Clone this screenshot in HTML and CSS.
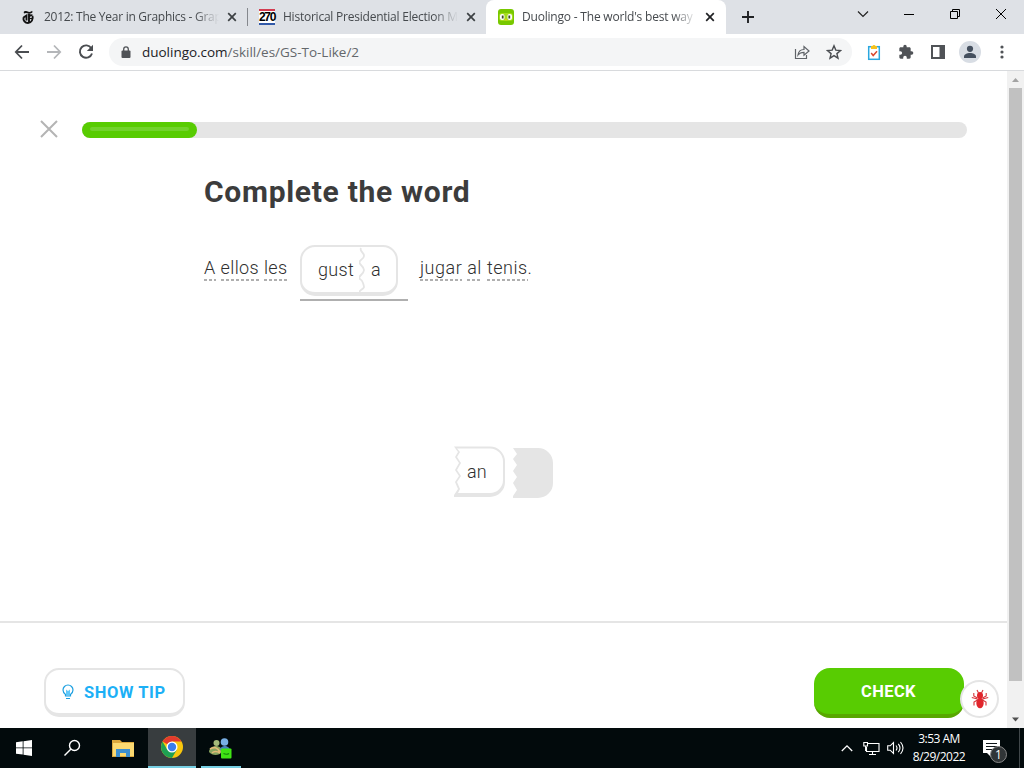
FILE: index.html
```html
<!DOCTYPE html>
<html lang="en">
<head>
    <meta charset="UTF-8">
    <meta name="viewport" content="width=device-width, initial-scale=1.0">
    <title>Duolingo - The world's best way</title>
    <link rel="stylesheet" href="styles.css">
</head>
<body>
    <div class="tabs">
        <div class="tab">
            <svg class="favicon" width="16" height="16" viewBox="0 0 16 16"><path d="M4 4.500C3 2 5 1.500 7 2.300s4 1 5-.5c1.500 2-1 3.200-3 2.700S5.500 3.500 4 4.500z" fill="#111"/><path d="M12.500 6.500c-2-1-3 0-3 1.500M12.500 7c1 3-1 7-4.500 7-3 0-5-2.500-4.500-5.500M3.500 8.500l3-2v5M9 4.500v9" fill="none" stroke="#111" stroke-width="1.900"/><path d="M9 9.500h4" stroke="#111" stroke-width="1.200"/></svg>
            <span class="tab-title title-nyt">2012: The Year in Graphics - Grap</span>
            <svg class="tab-close" width="10" height="10" viewBox="0 0 10 10"><path d="M1.200 1.200l7.600 7.600M8.800 1.200L1.200 8.800" stroke="#3c4043" stroke-width="1.700"/></svg>
        </div>
        <div class="tab tab-second">
            <span class="favicon icon-270">270</span>
            <span class="tab-title title-270">Historical Presidential Election M</span>
            <svg class="tab-close" width="10" height="10" viewBox="0 0 10 10"><path d="M1.200 1.200l7.600 7.600M8.800 1.200L1.200 8.800" stroke="#3c4043" stroke-width="1.700"/></svg>
        </div>
        <div class="tab tab-active">
            <svg class="favicon" width="16" height="16" viewBox="0 0 16 16"><rect width="16" height="16" rx="3" fill="#78c800"/><rect x="1" y="4" width="14" height="8" rx="3" fill="#a5dc1d"/><rect x="2" y="5" width="4.500" height="6" rx="2" fill="#fff"/><rect x="9.500" y="5" width="4.500" height="6" rx="2" fill="#fff"/><path d="M4.700 6.500v3M11.300 6.500v3" stroke="#3c4a20" stroke-width="1.800"/><path d="M7 10h2l-1 2z" fill="#ffc800"/></svg>
            <span class="tab-title title-duo">Duolingo - The world's best way</span>
            <svg class="tab-close" width="10" height="10" viewBox="0 0 10 10"><path d="M1.200 1.200l7.600 7.600M8.800 1.200L1.200 8.800" stroke="#202124" stroke-width="1.700"/></svg>
        </div>
        <svg class="new-tab" width="14" height="14" viewBox="0 0 14 14"><path d="M7 1v12M1 7h12" stroke="#202124" stroke-width="1.900"/></svg>
        <div class="window-buttons">
            <svg width="46" height="28" viewBox="0 0 46 28"><path d="M18 11.500l5 5 5-5" fill="none" stroke="#222" stroke-width="1.200"/></svg>
            <svg width="46" height="28" viewBox="0 0 46 28"><path d="M18 14.500h10" stroke="#000"/></svg>
            <svg width="46" height="28" viewBox="0 0 46 28"><path d="M18.500 11.500h7v7h-7zM20.500 11.500v-2h7v7h-2" fill="none" stroke="#000"/></svg>
            <svg width="46" height="28" viewBox="0 0 46 28"><path d="M18 9l10 10M28 9L18 19" stroke="#000"/></svg>
        </div>
    </div>

    <div class="toolbar">
        <svg class="nav" width="16" height="16" viewBox="0 0 16 16"><path d="M15 8H2M8 1.500L1.800 8 8 14.500" fill="none" stroke="#4a4d51" stroke-width="1.800"/></svg>
        <svg class="nav" width="16" height="16" viewBox="0 0 16 16"><path d="M1 8h13M8 1.500L14.200 8 8 14.500" fill="none" stroke="#b4b6b9" stroke-width="1.800"/></svg>
        <svg class="nav" width="16" height="16" viewBox="0 0 16 16"><path d="M13.300 4.200A6.200 6.200 0 1 0 14 9.500" fill="none" stroke="#4a4d51" stroke-width="1.900"/><path d="M15 .8V7H8.800z" fill="#4a4d51"/></svg>
        <div class="address">
            <svg width="10" height="13" viewBox="0 0 10 13"><rect x=".5" y="4.500" width="9" height="7.500" rx="1" fill="#505357"/><path d="M2.700 5V3.200a2.300 2.300 0 0 1 4.600 0V5" fill="none" stroke="#505357" stroke-width="1.300"/></svg>
            <span class="url">duolingo.com<span class="path">/skill/es/GS-To-Like/2</span></span>
            <svg class="share" width="16" height="16" viewBox="0 0 16 16"><path d="M1.500 5v9.500h11V11M4 11c.5-4 3-5.500 6-5.500V2.500L15 7l-5 4.200V8.300C7.500 8.300 5.500 9 4 11z" fill="none" stroke="#5f6368" stroke-width="1.200"/></svg>
            <svg class="star" width="16" height="16" viewBox="0 0 16 16"><path d="M8 1.800l1.800 4.300 4.700.4-3.600 3.100 1.100 4.600L8 11.700l-4 2.500 1.100-4.600-3.600-3.100 4.700-.4z" fill="none" stroke="#4a4d51" stroke-width="1.400"/></svg>
        </div>
        <svg class="ext" width="16" height="18" viewBox="0 0 16 18"><rect x="2.700" y="3.700" width="10.600" height="12.600" fill="#fff" stroke="#2aa7df" stroke-width="1.500"/><path d="M5 6V3h1.500a1.600 1.600 0 0 1 3 0H11v3z" fill="#f7c21c"/><path d="M5.200 10l2 2.500 3.800-4.200" fill="none" stroke="#d9482f" stroke-width="1.500"/></svg>
        <svg class="ext" width="16" height="16" viewBox="0 0 24 24"><path d="M20.500 11H19V7c0-1.100-.9-2-2-2h-4V3.500a2.500 2.500 0 0 0-5 0V5H4c-1.100 0-2 .9-2 2v3.800h1.500a2.700 2.700 0 0 1 0 5.400H2V20c0 1.100.9 2 2 2h3.800v-1.500a2.700 2.700 0 0 1 5.400 0V22H17c1.100 0 2-.9 2-2v-4h1.500a2.500 2.500 0 0 0 0-5z" fill="#505357"/></svg>
        <svg class="ext" width="16" height="16" viewBox="0 0 16 16"><path d="M1 1h14v14H1zM3 3v10h6.500V3z" fill="#505357" fill-rule="evenodd"/></svg>
        <svg class="avatar" width="22" height="22" viewBox="0 0 22 22"><circle cx="11" cy="11" r="11" fill="#d8dde4"/><circle cx="11" cy="7.800" r="3.100" fill="#45505f"/><path d="M5 17v-1.500c0-2 3-3.500 6-3.500s6 1.500 6 3.500V17z" fill="#45505f"/></svg>
        <svg class="dots" width="4" height="14" viewBox="0 0 4 14"><circle cx="2" cy="2" r="1.600" fill="#505357"/><circle cx="2" cy="7" r="1.600" fill="#505357"/><circle cx="2" cy="12" r="1.600" fill="#505357"/></svg>
    </div>

    <div class="viewport">
        <div class="page">
            <div class="header">
                <svg class="quit" width="18" height="18" viewBox="0 0 18 18"><path d="M1 1l16 16M17 1L1 17" stroke="#b4b4b4" stroke-width="2"/></svg>
                <div class="progress"><div class="progress-fill"><div class="shine"></div></div></div>
            </div>
            <div class="challenge">
                <h1>Complete the word</h1>
                <div class="sentence">
                    <div class="words words-left"><span class="hint">A</span> <span class="hint">ellos</span> <span class="hint">les</span></div>
                    <div class="blank">
                        <div class="token">
                            <span class="stem">gust</span>
                            <svg width="8" height="46" viewBox="0 0 8 46"><path d="M2 1q-1 2 1 4t2 4-3 4 0 5 3 5-3 5-1 4 3 4 1 4-3 3 0 4" fill="none" stroke="#e5e5e5" stroke-width="1.800"/></svg>
                            <span class="ending">a</span>
                        </div>
                    </div>
                    <div class="words words-right"><span class="hint">jugar</span> <span class="hint">al</span> <span class="hint">tenis</span>.</div>
                </div>
                <div class="choices">
                    <button class="choice" type="button">
                        <svg width="52" height="52" viewBox="0 0 52 52"><path d="M0 .5h36a15 15 0 0 1 15 15V36a15 15 0 0 1-15 15H0V49l4-6-3-7 4-6-4-6 4-7-4-6 3-5z" fill="#e5e5e5"/><path d="M3 2.500h33a13 13 0 0 1 13 13V34a13 13 0 0 1-13 13H4l2-4-3-7 4-6-4-6 4-7-4-6 3-5z" fill="#fff"/></svg>
                        <span>an</span>
                    </button>
                    <svg class="used" width="42" height="52" viewBox="0 0 42 52"><path d="M1 2h25a15 15 0 0 1 15 15v20a15 15 0 0 1-15 15H1v-2l4-6-4-7 4-6-4-6 4-6-4-6 4-5z" fill="#e5e5e5"/></svg>
                </div>
            </div>
            <div class="footer">
                <button class="tip" type="button">
                    <svg width="12" height="16" viewBox="0 0 12 16"><path d="M3.500 10.500C2 9.300 1 8 1 6a5 5 0 0 1 10 0c0 2-1 3.300-2.500 4.500v1.500h-5zM4 14.500h4" fill="none" stroke="#1c9fe0" stroke-width="1.200"/><path d="M4 5.500l2 1.500 2-1.500v6H4z" fill="#1cb0f6" opacity=".7"/></svg>
                    <span>SHOW TIP</span>
                </button>
                <button class="check" type="button"><span>CHECK</span></button>
                <div class="bug">
                    <svg width="18" height="20" viewBox="0 0 18 20"><ellipse cx="9" cy="14" rx="3.700" ry="5.200" fill="#e1252b"/><ellipse cx="9" cy="6.500" rx="3" ry="3.500" fill="#e1252b"/><path d="M6.500 9L2.800 7V4M11.500 9l3.700-2V4M6.500 10L.8 8.500M11.500 10l5.700-1.500M6.500 11L3 13v3.500M11.500 11l3.500 2v3.500M7.500 4L6 1M10.500 4L12 1" fill="none" stroke="#d8343a" stroke-width="1.100"/></svg>
                </div>
            </div>
        </div>
        <div class="scrollbar">
            <svg width="17" height="17" viewBox="0 0 17 17"><path d="M5 11l3.500-4 3.500 4z" fill="#a3a3a3"/></svg>
            <div class="thumb"></div>
            <svg class="scroll-down" width="17" height="17" viewBox="0 0 17 17"><path d="M5 6.500l3.500 4 3.500-4z" fill="#505050"/></svg>
        </div>
    </div>

    <div class="taskbar">
        <div class="task"><svg width="16" height="16" viewBox="0 0 16 16"><path d="M0 2.300L6.700 1.300v6.200H0zM7.500 1.200L16 0v7.500H7.500zM0 8.300h6.700v6.300L0 13.700zM7.500 8.300H16V16l-8.500-1.200z" fill="#fff"/></svg></div>
        <div class="task"><svg width="18" height="18" viewBox="0 0 18 18"><circle cx="11.500" cy="6.500" r="5" fill="none" stroke="#fff" stroke-width="1.400"/><path d="M8 10L1.500 16.500" stroke="#fff" stroke-width="1.500"/></svg></div>
        <div class="task task-files"><svg width="22" height="19" viewBox="0 0 22 19"><path d="M0 1h8l2 2h12v15H0z" fill="#dca83d"/><path d="M1 4h21v13H1z" fill="#fbd971"/><path d="M4 18v-8h14v8h-4v-4H8v4z" fill="#3d8fd0"/></svg></div>
        <div class="task task-open"><svg width="22" height="22" viewBox="0 0 22 22"><circle cx="11" cy="11" r="11" fill="#f9c70d"/><path d="M11 11L1.500 5.500A11 11 0 0 1 20.500 5.500H11z" fill="#e33b2e"/><path d="M1.500 5.500A11 11 0 0 0 11 22l4.800-8.300L11 11 6.300 13.800z" fill="#1ea053"/><circle cx="11" cy="11" r="5.500" fill="#fff"/><circle cx="11" cy="11" r="4.200" fill="#3b7ded"/></svg></div>
        <div class="task task-people"><svg width="24" height="22" viewBox="0 0 24 22"><circle cx="7.500" cy="6" r="3" fill="#a5bb7a"/><circle cx="15.500" cy="5" r="3.800" fill="#78afe4"/><path d="M0 15c0-4 4-6 7-6s6 2 6 6c-3 4-10 4-13 0z" fill="#88a45f"/><path d="M11 13c0-3 3-4 5-4s5 2 5 4z" fill="#4681bc"/><path d="M1 12q6-4 10 3M3 16q3-3 8 0" fill="none" stroke="#e3bc78" stroke-width="1.700"/><rect x="12" y="11.500" width="10.500" height="10" rx="1" fill="#3fe414"/><path d="M14.500 16.500q3 1.500 5.500 0" fill="none" stroke="#16870b" stroke-width="1.200"/></svg></div>
        <div class="tray">
            <svg width="12" height="8" viewBox="0 0 12 8"><path d="M.8 7L6 1.800 11.200 7" fill="none" stroke="#fff" stroke-width="1.300"/></svg>
            <svg width="17" height="15" viewBox="0 0 17 15"><path d="M5 2.500h11v8H3.500V6M9.500 10.500v3M6 13.500h7M.8 1.500h3.700V5H.8zM2.600 5v5" fill="none" stroke="#fff" stroke-width="1.100"/></svg>
            <svg width="17" height="14" viewBox="0 0 17 14"><path d="M.7 4.800h2.500L6.500 1.500v11L3.200 9.200H.7zM9 4.500q2 2.500 0 5M11.300 2.800q3.400 4.200 0 8.400M13.500 1q5 6 0 12" fill="none" stroke="#fff" stroke-width="1.100"/></svg>
            <div class="clock"><span class="time">3:53 AM</span><span class="date">8/29/2022</span></div>
            <div class="notify">
                <svg width="17" height="17" viewBox="0 0 17 17"><path d="M0 0h17v13h-9v4l-4-4H0z" fill="#fff"/><path d="M3 3.500h11M3 6.500h11M3 9.500h11" stroke="#10171a"/></svg>
                <span class="badge">1</span>
            </div>
        </div>
    </div>
</body>
</html>
```
FILE: styles.css
```css
* {
    box-sizing: border-box;
}
body {
    margin: 0;
    width: 1024px;
    height: 768px;
    overflow: hidden;
    display: flex;
    flex-direction: column;
    font-family: "Open Sans", "Noto Sans", sans-serif;
    background-color: #fff;
}
svg {
    display: block;
    flex: none;
}
button {
    font: inherit;
    border: 0;
    padding: 0;
    background: none;
}

/* browser */
.tabs {
    display: flex;
    flex: none;
    height: 34px;
    background-color: #dee1e6;
}
.tab {
    display: flex;
    align-items: center;
    width: 247px;
    padding-left: 20px;
}
.tab-second {
    width: 239px;
    padding-left: 12px;
    background: linear-gradient(#85888d, #85888d) 0 8px / 1px 18px no-repeat;
}
.tab-active {
    width: 240px;
    padding-left: 12px;
    background-color: #fff;
    border-radius: 8px 8px 0 0;
}
.favicon {
    flex: none;
    width: 16px;
    height: 16px;
}
.icon-270 {
    font: bold 12px/12px "Liberation Sans", Arial, sans-serif;
    letter-spacing: -1.3px;
    border-top: 2px solid #d33c50;
    border-bottom: 2px solid #3159a8;
    color: #000;
    background: #fff;
}
.tab-title {
    width: 175px;
    margin-left: 8px;
    white-space: nowrap;
    font-size: 12px;
    line-height: 18px;
    color: #45494d;
    -webkit-mask-image: linear-gradient(to right, #000 86%, transparent);
    mask-image: linear-gradient(to right, #000 86%, transparent);
}
.title-nyt {
    letter-spacing: -0.27px;
}
.title-270 {
    letter-spacing: -0.23px;
}
.title-duo {
    letter-spacing: -0.2px;
}
.tab-close {
    margin-left: 8px;
}
.new-tab {
    margin: 10px 0 0 15px;
}
.window-buttons {
    display: flex;
    margin-left: auto;
}
.toolbar {
    display: flex;
    flex: none;
    align-items: center;
    height: 37px;
    padding-left: 14px;
    border-bottom: 1px solid #d8dadd;
}
.nav {
    margin-right: 16px;
}
.address {
    display: flex;
    align-items: center;
    width: 743px;
    height: 28px;
    padding: 0 10px 0 12px;
    border-radius: 14px;
    background-color: #f4f5f6;
    margin-left: -1px;
}
.url {
    margin-left: 11px;
    font-size: 13.5px;
    letter-spacing: -0.02px;
    color: #202124;
}
.path {
    color: #63676b;
}
.share {
    margin-left: auto;
}
.star {
    margin-left: 16px;
}
.ext {
    margin-left: 16px;
}
.address + .ext {
    margin-left: 14px;
}
.avatar {
    margin-left: 13px;
}
.dots {
    margin-left: 19px;
}

/* lesson */
.viewport {
    display: flex;
    height: 657px;
    flex: none;
}
.page {
    display: flex;
    flex-direction: column;
    width: 1007px;
    font-family: Roboto, sans-serif;
    color: #4b4b4b;
}
.header {
    display: flex;
    align-items: center;
    height: 16px;
    margin: 51px 40px 0;
}
.quit {
    margin-bottom: 2px;
}
.progress {
    width: 885px;
    height: 16px;
    margin-left: 24px;
    border-radius: 8px;
    background-color: #e5e5e5;
}
.progress-fill {
    width: 115px;
    height: 16px;
    padding: 5px 8px;
    border-radius: 8px;
    background-color: #58cc02;
}
.shine {
    height: 4px;
    border-radius: 2px;
    background-color: #72d32c;
}
.challenge {
    flex: 1;
    padding: 36px 0 0 204px;
}
h1 {
    margin: 0;
    font-size: 30px;
    line-height: 36px;
    font-weight: 700;
    color: #3c3c3c;
    letter-spacing: 0.7px;
}
.sentence {
    display: flex;
    margin-top: 35px;
    font-size: 18px;
    font-weight: 300;
    color: #303030;
    letter-spacing: 0.35px;
}
.words {
    display: flex;
    margin-top: 10px;
    height: 26px;
    line-height: 26px;
    white-space: nowrap;
}
.words-left {
    width: 96px;
}
.words-right {
    margin-left: 12px;
    letter-spacing: 0.5px;
}
.hint {
    height: 26px;
    background: repeating-linear-gradient(to right, #afafaf 0 3px, transparent 3px 5px) left bottom / 100% 2px no-repeat;
}
.hint + .hint {
    margin-left: 5px;
}
.blank {
    width: 108px;
    height: 56px;
    border-bottom: 2px solid #afafaf;
}
.token {
    display: flex;
    align-items: center;
    width: 98px;
    height: 51px;
    border: 2px solid #e5e5e5;
    border-bottom-width: 4px;
    border-radius: 15px;
}
.stem {
    width: 41px;
    margin: 0 0 0 16px;
}
.ending {
    margin: 0 0 0 4px;
}
.choices {
    display: flex;
    margin: 145px 0 0 250px;
    gap: 6px;
}
.choice {
    display: grid;
    color: #303030;
    font-size: 18px;
    font-weight: 300;
}
.choice > * {
    grid-area: 1 / 1;
}
.choice span {
    align-self: center;
    justify-self: start;
    margin: 0 0 1px 13px;
    letter-spacing: 0.2px;
}
.footer {
    position: relative;
    display: flex;
    justify-content: space-between;
    height: 107px;
    padding: 45px 43px 0 44px;
    border-top: 2px solid #e5e5e5;
}
.tip {
    display: flex;
    align-items: center;
    width: 141px;
    height: 49px;
    padding-left: 16px;
    border: 2px solid #e5e5e5;
    border-bottom-width: 4px;
    border-radius: 15px;
    font-size: 16.5px;
    font-weight: 700;
    color: #1cb0f6;
}
.tip span {
    margin: 2px 0 0 10px;
    letter-spacing: 0.6px;
}
.check {
    width: 150px;
    height: 50px;
    padding-right: 1px;
    border-bottom: 4px solid #58a700;
    border-radius: 16px;
    background-color: #58cc02;
    color: #fff;
    font-size: 16.5px;
    font-weight: 700;
    letter-spacing: 0.4px;
}
.bug {
    position: absolute;
    right: 8px;
    bottom: 10px;
    display: flex;
    align-items: center;
    justify-content: center;
    width: 39px;
    height: 38px;
    border: 2px solid #e5e5e5;
    border-radius: 50%;
    background-color: #fff;
}
.scrollbar {
    display: flex;
    flex-direction: column;
    width: 17px;
    background-color: #f1f1f1;
}
.thumb {
    height: 593px;
    margin: 0 2px;
    background-color: #c1c1c1;
}
.scroll-down {
    margin-top: auto;
}

/* windows taskbar */
.taskbar {
    display: flex;
    flex: none;
    height: 40px;
    background-color: #020a0c;
    color: #fff;
}
.task {
    display: flex;
    align-items: center;
    justify-content: center;
    width: 48px;
    height: 40px;
}
.task-files {
    width: 52px;
    padding-left: 2px;
}
.task-open {
    background-color: #383d3f;
    border-bottom: 2px solid #76cfe3;
}
.task-people {
    width: 40px;
    margin-left: 5px;
    padding-top: 2px;
    border-bottom: 2px solid #76cfe3;
}
.tray {
    display: flex;
    align-items: center;
    margin-left: auto;
    padding-right: 2px;
    border-right: 1px solid #40474a;
    margin-right: 4px;
}
.tray > svg {
    margin-right: 10px;
}
.tray > svg + svg {
    margin-right: 7px;
}
.clock {
    display: flex;
    flex-direction: column;
    align-items: center;
    width: 56px;
    font-size: 12px;
    line-height: 18px;
    white-space: nowrap;
}
.time,
.date {
    letter-spacing: -0.5px;
}
.notify {
    position: relative;
    width: 34px;
    margin-left: 16px;
}
.badge {
    position: absolute;
    left: 7px;
    top: 6px;
    width: 17px;
    height: 17px;
    border: 1px solid #888;
    border-radius: 50%;
    background-color: #303537;
    font-size: 12px;
    line-height: 15px;
    text-align: center;
}
```
